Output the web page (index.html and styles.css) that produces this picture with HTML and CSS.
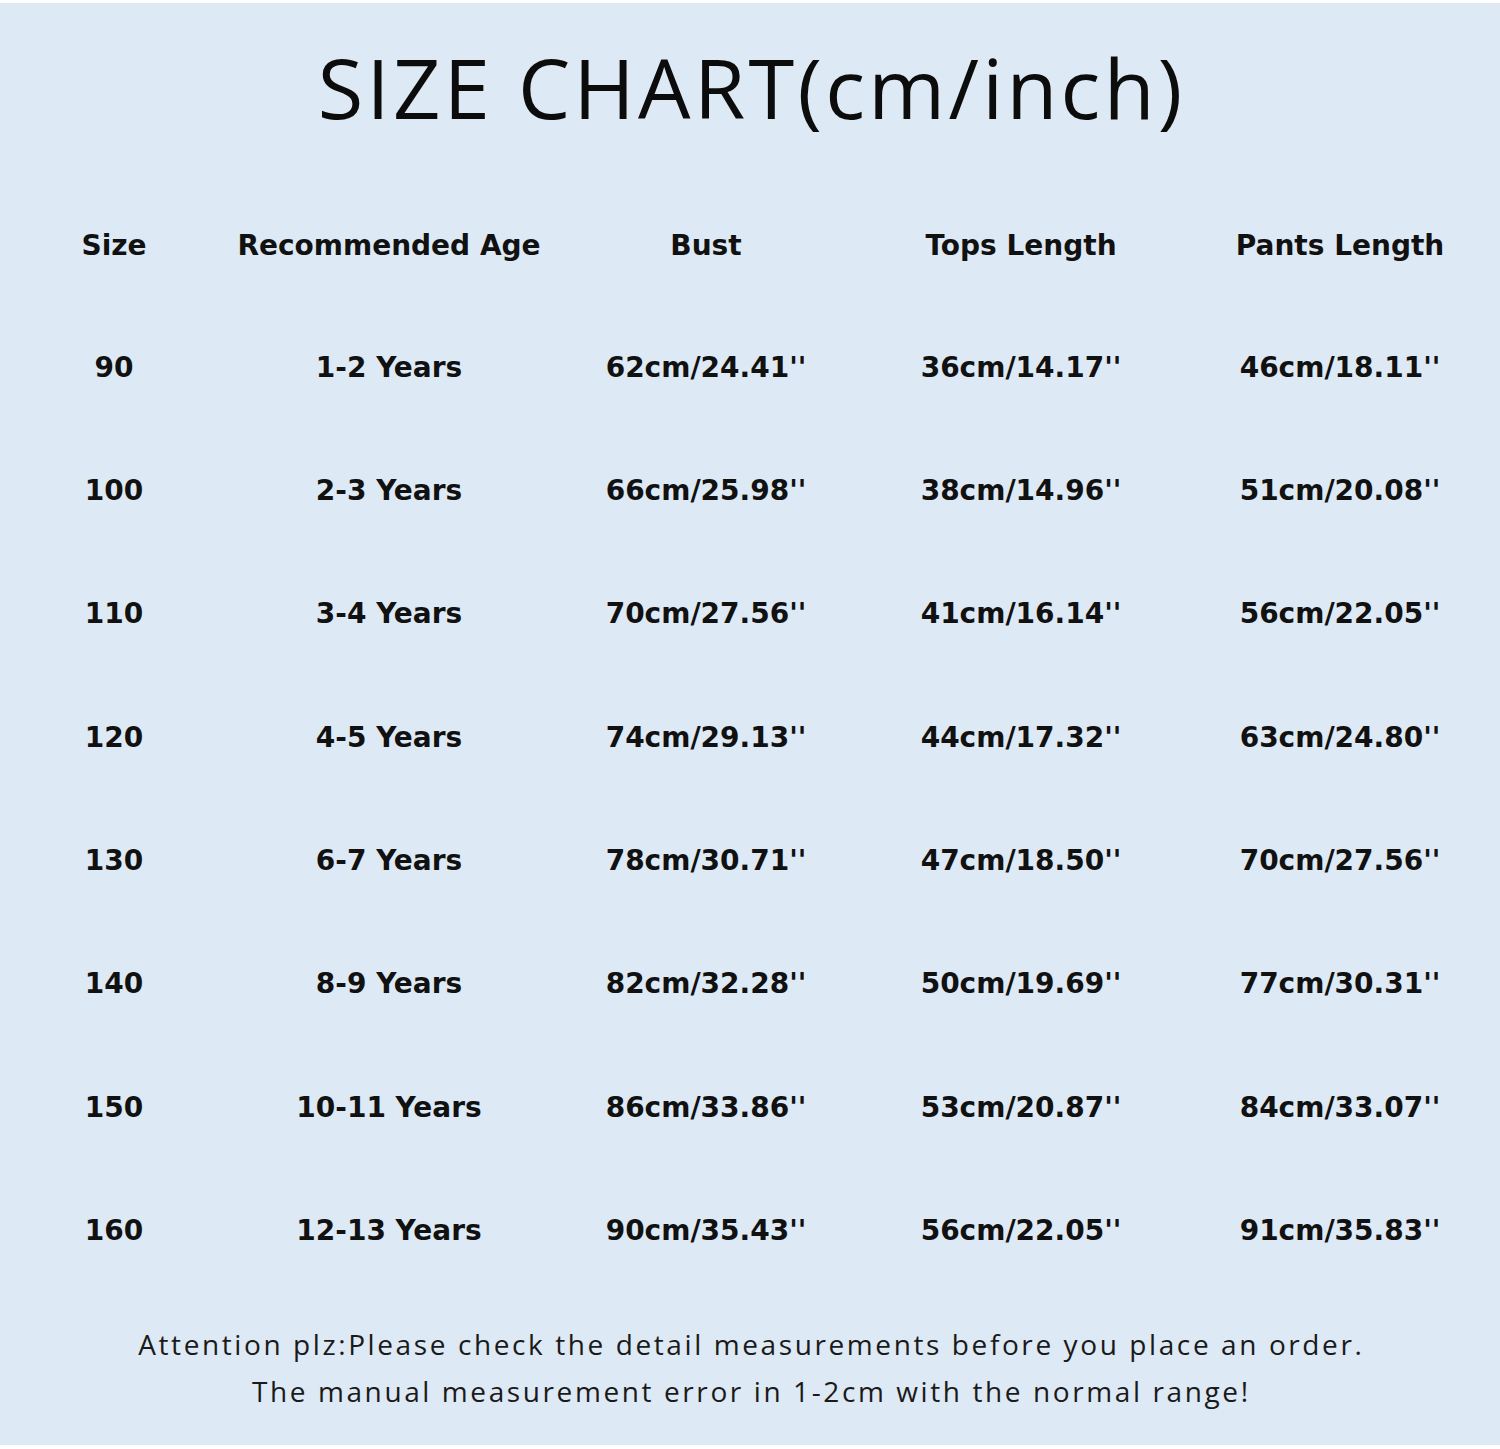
FILE: index.html
```html
<!DOCTYPE html>
<html lang="en">
<head>
<meta charset="utf-8">
<title>Size Chart</title>
<link rel="stylesheet" href="styles.css">
</head>
<body>
<main class="sheet">
  <h1 class="title">SIZE CHART(cm/inch)</h1>
  <div class="chart">
    <div class="row head">
      <span>Size</span><span>Recommended Age</span><span>Bust</span><span>Tops Length</span><span>Pants Length</span>
    </div>
    <div class="row"><span>90</span><span>1-2 Years</span><span>62cm/24.41''</span><span>36cm/14.17''</span><span>46cm/18.11''</span></div>
    <div class="row"><span>100</span><span>2-3 Years</span><span>66cm/25.98''</span><span>38cm/14.96''</span><span>51cm/20.08''</span></div>
    <div class="row"><span>110</span><span>3-4 Years</span><span>70cm/27.56''</span><span>41cm/16.14''</span><span>56cm/22.05''</span></div>
    <div class="row"><span>120</span><span>4-5 Years</span><span>74cm/29.13''</span><span>44cm/17.32''</span><span>63cm/24.80''</span></div>
    <div class="row"><span>130</span><span>6-7 Years</span><span>78cm/30.71''</span><span>47cm/18.50''</span><span>70cm/27.56''</span></div>
    <div class="row"><span>140</span><span>8-9 Years</span><span>82cm/32.28''</span><span>50cm/19.69''</span><span>77cm/30.31''</span></div>
    <div class="row"><span>150</span><span>10-11 Years</span><span>86cm/33.86''</span><span>53cm/20.87''</span><span>84cm/33.07''</span></div>
    <div class="row"><span>160</span><span>12-13 Years</span><span>90cm/35.43''</span><span>56cm/22.05''</span><span>91cm/35.83''</span></div>
  </div>
  <div class="note">
    <p>Attention plz:Please check the detail measurements before you place an order.</p>
    <p>The manual measurement error in 1-2cm with the normal range!</p>
  </div>
</main>
</body>
</html>
```

FILE: styles.css
```css
html, body {
  margin: 0;
  padding: 0;
  background: #ffffff;
}

.sheet {
  margin-top: 3px;
  height: 1442px;
  background: #dde9f4;
  display: flex;
  flex-direction: column;
  overflow: hidden;
  color: #111111;
  font-family: "Open Sans", "Liberation Sans", sans-serif;
}

.title {
  margin: 23.5px 0 0 0;
  padding-left: 3.3px;
  height: 120px;
  line-height: 120px;
  font-size: 83px;
  font-weight: 400;
  text-align: center;
  color: #0c0c0c;
  letter-spacing: 3.3px;
}

.chart {
  margin-top: 39.85px;
  display: flex;
  flex-direction: column;
}

.row {
  display: grid;
  grid-template-columns: 228px 322px 312px 318px 320px;
  height: 123.3px;
  align-items: center;
  font-family: "DejaVu Sans", "Open Sans", sans-serif;
  font-size: 28px;
  font-weight: 700;
}

.row.head {
  height: 119.3px;
}

.row span {
  text-align: center;
  white-space: nowrap;
}

.note {
  margin-top: 29px;
  padding-left: 2.6px;
  text-align: center;
  font-size: 28px;
  font-weight: 400;
  color: #1a1a1a;
  letter-spacing: 2.6px;
}

.note p {
  margin: 0;
  line-height: 47px;
}
```
